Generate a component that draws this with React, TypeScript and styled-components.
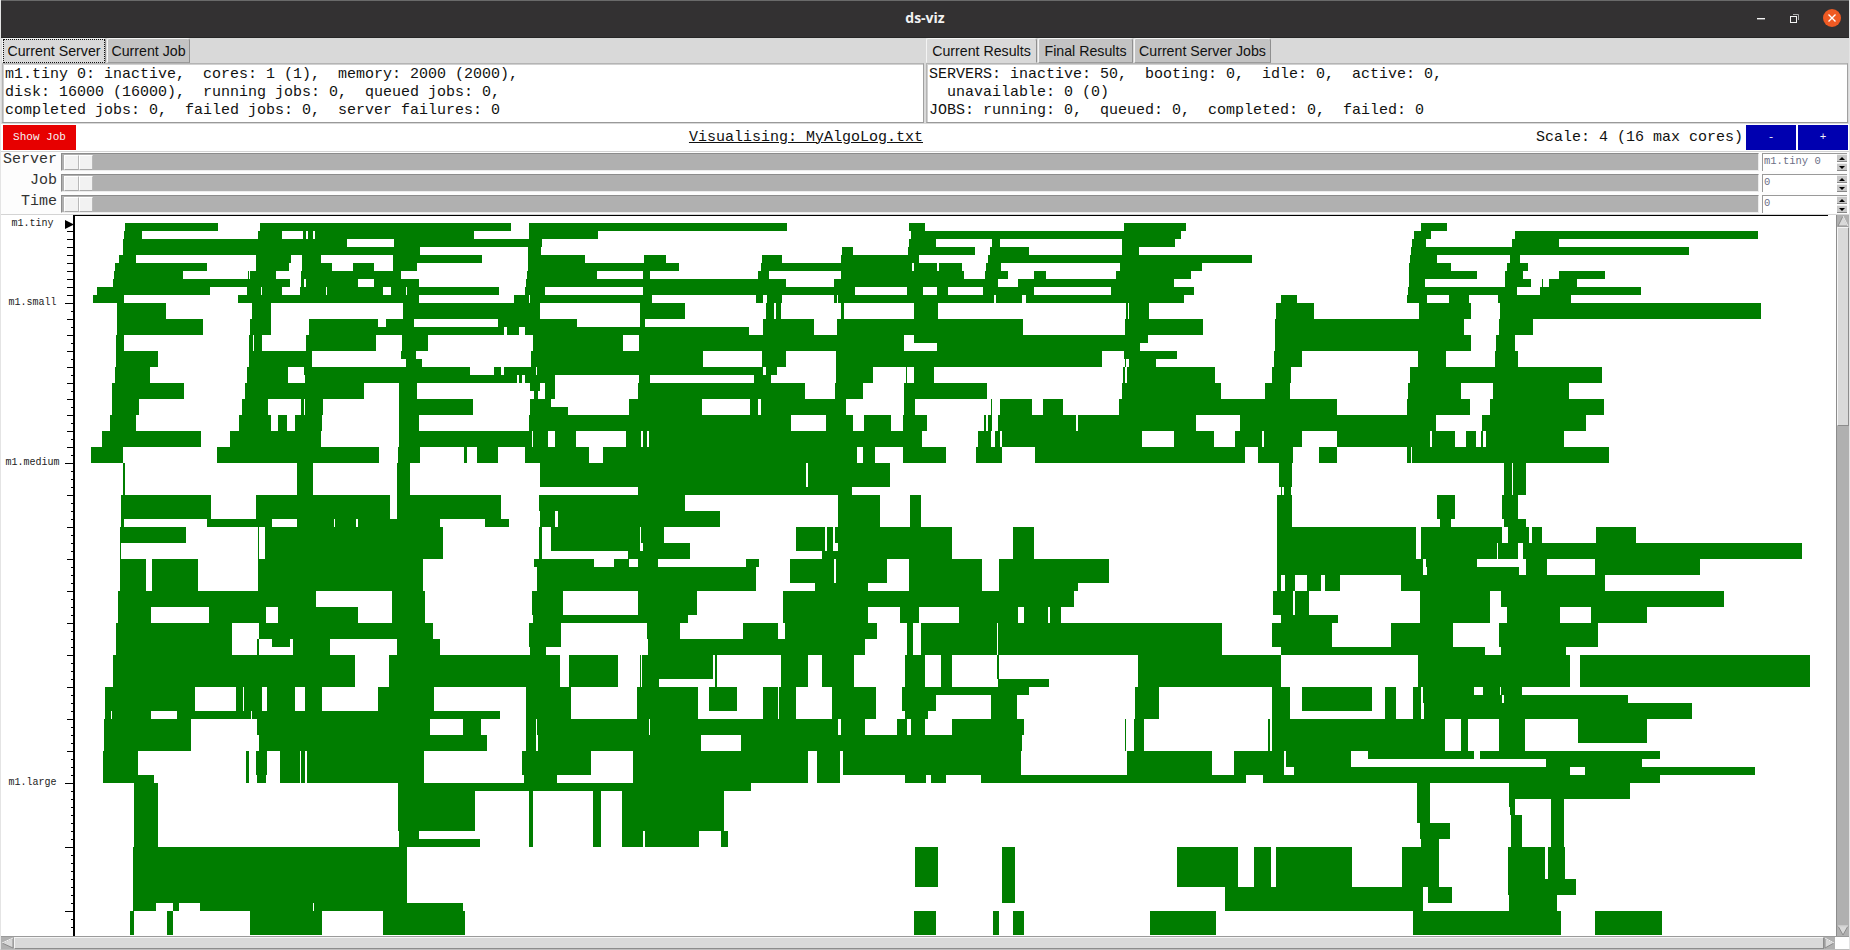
import React, { useMemo } from "react";
import styled, { createGlobalStyle } from "styled-components";

const Global = createGlobalStyle`
  html, body { margin: 0; padding: 0; background: #d9d9d9; overflow: hidden; }
  * { box-sizing: border-box; }
`;

const MONO = `"Liberation Mono", monospace`;
const SANS = `"Liberation Sans", sans-serif`;

const Window = styled.div`
  width: 1850px;
  height: 950px;
  display: flex;
  flex-direction: column;
  background: #d9d9d9;
  overflow: hidden;
  border-left: 1px solid #e4e4e4;
  border-right: 1px solid #e4e4e4;
  border-bottom: 1px solid #bdbdbd;
`;
const TitleBar = styled.header`
  height: 38px;
  flex: none;
  display: grid;
  grid-template-columns: 1fr auto 1fr;
  align-items: center;
  background: #333132;
  border-top: 1px solid #6a6a6a;
  border-bottom: 1px solid #262626;
  margin: 0 -1px;
`;
const Title = styled.div`
  color: #f2f2f2;
  font: 700 14px "Open Sans", sans-serif;
  padding-bottom: 3px;
`;
const WinControls = styled.div`
  grid-column: 3;
  display: flex;
  justify-content: flex-end;
  align-items: center;
  padding-right: 9px;
  gap: 24px;
  padding-bottom: 2px;
`;
const WinIcon = styled.svg`
  display: block;
  flex: none;
`;
const TopPanes = styled.div`
  display: grid;
  grid-template-columns: 924px 1fr;
  height: 86px;
  flex: none;
`;
const Pane = styled.section<{ $pad: number }>`
  display: flex;
  flex-direction: column;
  padding-left: ${(p) => p.$pad}px;
  padding-right: 1px;
`;
const TabStrip = styled.div`
  height: 25px;
  display: flex;
  gap: 1px;
  align-items: flex-end;
`;
const Tab = styled.div<{ $active?: boolean; $w: number }>`
  width: ${(p) => p.$w}px;
  height: 25px;
  display: flex;
  align-items: center;
  justify-content: center;
  font: 14.2px ${SANS};
  color: #111;
  white-space: nowrap;
  background: ${(p) => (p.$active ? "#d9d9d9" : "#c3c3c3")};
  border: 1px solid #8f8f8f;
  border-color: #f4f4f4 #8f8f8f ${(p) => (p.$active ? "#d9d9d9" : "#9a9a9a")} #f4f4f4;
  border-top-right-radius: 3px;
  border-top-left-radius: 2px;
`;
const Focused = styled.span`
  outline: 1px dotted #111;
  padding: 2px 3px;
  line-height: 18px;
`;
const InfoBox = styled.pre`
  margin: 0;
  height: 60px;
  background: #fff;
  border: 1px solid #b4b4b4;
  border-right-color: #a0a0a0;
  border-bottom-color: #999;
  box-shadow: inset 1px 1px 0 #d0d0d0;
  padding: 2px 0 0 2px;
  font: 15px/18px ${MONO};
  color: #111;
  overflow: hidden;
`;
const Toolbar = styled.div`
  flex: none;
  height: 28px;
  background: #fff;
  display: flex;
  align-items: center;
  justify-content: space-between;
  padding: 1px 1px 2px 2px;
  border-bottom: 1px solid #d4d4d4;
`;
const ActionButton = styled.button<{ $bg: string; $w: number }>`
  width: ${(p) => p.$w}px;
  height: 25px;
  background: ${(p) => p.$bg};
  color: #f4f4f4;
  border: 1px solid ${(p) => p.$bg};
  font: 11px ${MONO};
  padding: 0;
`;
const FileName = styled.div`
  font: 15px ${MONO};
  color: #111;
  text-decoration: underline;
`;
const ScaleGroup = styled.div`
  display: flex;
  align-items: center;
  gap: 2px;
`;
const ScaleText = styled.div`
  font: 15px ${MONO};
  color: #111;
  margin-right: 1px;
`;
const SliderGrid = styled.div`
  flex: none;
  background: #fdfdfd;
  display: grid;
  grid-template-columns: 59px 1fr 90px;
  grid-auto-rows: 21px;
  height: 63px;
  border-bottom: 1px solid #d4d4d4;
`;
const SliderLabel = styled.div`
  font: 15px/16px ${MONO};
  color: #333;
  text-align: right;
  padding-right: 3px;
  height: 21px;
`;
const Track = styled.div`
  height: 18px;
  margin: 1px 0 2px 1px;
  background: #b0b0b0;
  border-top: 1px solid #8c8c8c;
  border-left: 1px solid #8c8c8c;
  border-right: 1px solid #ececec;
  border-bottom: 1px solid #ececec;
  padding: 1px 0 0 2px;
  display: flex;
`;
const ThumbPart = styled.div`
  width: 14.5px;
  height: 15px;
  background: #f2f2f2;
  border: 1px solid #fff;
  border-right-color: #b9b9b9;
  border-bottom-color: #a9a9a9;
`;
const Spin = styled.div`
  height: 18px;
  margin: 1px 2px 2px 3px;
  background: #fff;
  border-top: 1px solid #9a9a9a;
  border-left: 1px solid #9a9a9a;
  display: flex;
  justify-content: space-between;
  padding-left: 1px;
`;
const SpinText = styled.span`
  font: 10.5px/14px ${MONO};
  color: #6c6f86;
`;
const SpinButtons = styled.div`
  width: 10px;
  display: flex;
  flex-direction: column;
  gap: 1px;
`;
const SpinBtn = styled.div`
  height: 8px;
  background: #c8c8c8;
  border-top: 1px solid #eee;
  border-bottom: 1px solid #888;
  display: flex;
  align-items: center;
  justify-content: center;
`;
const SpinArrow = styled.i<{ $up?: boolean }>`
  width: 0;
  height: 0;
  border-left: 3px solid transparent;
  border-right: 3px solid transparent;
  ${(p) => (p.$up ? "border-bottom: 3px solid #000;" : "border-top: 3px solid #000;")}
`;
const ChartRow = styled.div`
  flex: 1;
  min-height: 0;
  display: flex;
  background: #fff;
`;
const Axis = styled.div`
  position: relative;
  width: 74px;
  flex: none;
  background: #fff;
`;
const TypeLabel = styled.span<{ $y: number }>`
  position: absolute;
  left: 0;
  width: 63px;
  top: ${(p) => p.$y}px;
  text-align: center;
  font: 10px/12px ${MONO};
  color: #222;
`;
const Drawing = styled.svg`
  display: block;
  flex: none;
`;
const VScroll = styled.div`
  width: 13px;
  margin-left: auto;
  flex: none;
  background: #b0b0b0;
  border-left: 1px solid #8c8c8c;
  display: flex;
  flex-direction: column;
  justify-content: space-between;
`;
const VThumbWrap = styled.div`
  flex: 1;
  display: flex;
  flex-direction: column;
`;
const VThumb = styled.div`
  height: 199px;
  flex: none;
  background: #d9d9d9;
  border: 1px solid #f4f4f4;
  border-right-color: #8c8c8c;
  border-bottom-color: #8c8c8c;
`;
const HScroll = styled.div`
  flex: none;
  height: 13px;
  display: flex;
  background: #fff;
  border-top: 1px solid #9a9a9a;
`;
const HThumb = styled.div`
  flex: 1;
  background: #d9d9d9;
  border: 1px solid #f4f4f4;
  border-right-color: #8c8c8c;
  border-bottom-color: #8c8c8c;
`;
const Corner = styled.div`
  width: 14px;
  background: #fff;
  flex: none;
`;

type Row = [number, string, string];
const ROWS: Row[] = [
  [1, "131-318 402-907 943-1461", "140-165 477-574 942-983"],
  [1, "129-165 398-446 489-495 499-509 513-832 943-1082", "143-566 931-958 1090-1471"],
  [1, "127-577 671-968", "140-182 270-282 474-557 929-950 1085-1159"],
  [1, "127-724 941-967", "34-52 138-243 267-328 474-500 927-1363"],
  [1, "119-153 394-464 486-525 669-848 941-1055 1174-1218 1411-1451", "33-155 263-677 925-967 1082-1098"],
  [1, "111-296 394-460 486-547 589-631 669-718 941-1244 1409-1568", "0-144 147-184 187-223 260-284 470-599 924-989 1077-1110"],
  [1, "109-247 377-379 382-434 484-685 939-1080 1172-1186 1403-1425", "33-226 259-295 336-354 464-582 924-1030 1074-1102 1159-1231"],
  [1, "107-462 484-491 495-599 631-722 937-1459 1556-1568", "22-279 310-555 924-949 1074-1115 1132-1133 1143-1187"],
  [1, "74-302 376-404 406-446 482-534 537-649 665-696 698-883 935-975 1172-1568", "0-55 136-162 183-201 256-336 456-586 922-1093 1129-1287"],
  [1, "66-129 358-722 913-943 945-1190 1399-1414 1421-1451 1556-1562 1565-1568", "22-25 28-273 276-317 323-571 723-748 920-952 986-1018 1063-1178"],
  [2, "115-213 386-424 690-965 1166-1256 1419-1436 1440-1449", "33-37 147-185 480-483 485-516 715-775 939-1021 1066-1475"],
  [1, "115-287 382-424 501-639 655-712 880-1039 1166-1176 1413-1516 1562-1568", "27-318 478-601 713-1010 1065-1118"],
  [1, "115-287 382-424 501-893 899-923 935-1385 1413-1516 1562-1568", "27-318 478-601 713-1010 1065-1118"],
  [1, "113-129 380-388 390-406 495-635 688-740 951-1132 1164-1568", "0-132 147-514 713-1021 1060-1090"],
  [1, "113-129 380-388 390-406 495-635 688-740 951-1132 1164-1568", "0-132 184-502 713-1021 1060-1090"],
  [1, "113-197 380-507 685-716 947-1293 1411-1459 1560-1568", "25-442 477-560 712-756 938-982 1058-1094"],
  [1, "113-197 380-507 696-728 947-1293 1411-1459 1560-1568", "25-442 479-480 484-527 712-756 938-982 1058-1094"],
  [1, "111-181 376-458 491-824 872-886 893-957 959-1413 1419-1441 1560-1568", "25-83 135-136 147-179 475-478 482-619 709-739 925-1226"],
  [1, "111-181 376-458 493-919 923-929 935-995 1164-1186 1395-1429 1560-1568", "25-83 135-136 147-179 475-478 482-619 709-739 925-1226"],
  [1, "105-249 372-611 681-718 945-965 975-995 1162-1498 1558-1568", "24-67 132-262 474-629 698-737 922-1005 1055-1174"],
  [1, "105-249 372-611 681-718 953-961 975-995 1162-1498 1558-1568", "24-67 132-262 474-629 698-737 922-1005 1055-1174"],
  [1, "105-159 366-418 484-491 493-529 681-830 945-987 1144-1291 1387-1403 1409-1568", "0-41 132-149 268-270 282-332 350-381 469-811 920-1019 1051-1229"],
  [1, "105-159 366-418 484-491 493-529 681-830 945-1021 1144-1291 1387-1403 1409-1568", "0-41 132-149 268-270 282-332 350-381 469-811 920-1019 1051-1229"],
  [2, "101-153 360-424 438-456 472-527 681-722 943-1469 1540-1568", "9-52 69-111 130-168 257-260 263-270 279-401 405-590 659-966 1038-1201"],
  [2, "84-283 342-525 681-949 951-981 995-1037 1138-1168 1172-1180 1184-1568", "0-160 248-268 274-283 286-505 555-618 651-693 696-756 811-956 960-996 1013-1029 1036-1040 1044-1167"],
  [2, "62-127 316-641 679-724 812-818 838-880 935-1063 1092-1568", "0-58 67-86 130-198 245-285 337-666 687-742 782-811 920-927 928-1237"],
  [3, "126-131 476-509 677-704 965-1500 1504-1568", "0-110 720-740 1073-1085 1087-1107"],
  [1, "126-131 476-509 677-704 1162-1568", "0-50 723-725 728-739 1073-1085 1087-1107"],
  [2, "123-304 394-663 677-887 963-1256", "28-94 141-158 717-740 967-996 1069-1094"],
  [1, "123-304 394-663 677-887 965-995 1001-1327", "28-94 141-158 717-740 967-996 1069-1094"],
  [1, "123-129 296-426 476-550 553-596 599-764 854-903 965-995 1001-1327", "28-94 141-158 717-740 972-989 1073-1107"],
  [2, "121-253 398-400 412-770 963-969 987-1165 1168-1214 1480-1538 1542-1554 1558-1568", "0-8 11-20 28-207 303-336 716-935 942-1069 1079-1112 1116-1132 1217-1279"],
  [1, "121-123 398-400 412-770 963-969 987-1165 1172-1266 1480-1538 1542-1554 1565-1568", "0-8 11-20 28-207 303-336 716-935 942-1062 1063-1094 1102-1540"],
  [1, "121-123 398-400 412-770 963-969 1142-1266 1532-1568", "3-207 303-336 716-935 942-1062 1063-1094 1102-1540"],
  [1, "121-173 185-277 398-730 953-1073 1114-1144 1162-1202 1379-1405 1467-1556 1559-1568", "0-22 26-105 140-254 281-453 716-946 950-1030 1107-1140 1215-1380"],
  [1, "121-173 185-277 398-730 959-1399 1467-1556 1559-1568", "0-22 26-105 140-254 281-453 716-946 952-1096 1107-1140 1215-1380"],
  [1, "121-173 185-277 398-730 959-1399 1467-1556 1559-1568", "0-22 26-105 140-254 281-453 717-723 729-745 764-786 792-815 911-1231"],
  [1, "121-173 185-277 398-730 959-1399 1518-1568", "0-75 140-254 281-405 717-723 729-745 764-786 792-815 911-1231"],
  [2, "117-515 667-734 949-1011 1162-1281 1453-1568", "0-398 710-741 745-767 941-1051 1068-1417"],
  [1, "117-183 300-414 438-599 667-734 949-1011 1162-1281 1453-1568", "0-75 125-155 218-310 320-358 361-378 710-741 745-767 941-1051 1077-1160 1209-1297"],
  [1, "117-183 300-414 438-599 667-734 951-1262 1453-1568", "0-75 125-155 218-310 320-358 361-378 723-812 941-1051 1077-1160 1209-1297"],
  [2, "113-346 401-750 943-1007 1180-1246 1373-1443 1457-1568", "0-89 136-146 158-278 279-630 709-803 895-993 1065-1220"],
  [1, "113-346 396-400 426-462 468-543 677-764 943-1007 1182-1568", "0-71 136-146 158-278 279-630 709-803 895-993 1065-1220"],
  [1, "113-346 396-400 468-543 677-764 945-977 1182-1568", "0-71 136-146 158-278 279-630 723-1043 1068-1170"],
  [3, "107-593 661-1005 1023-1122 1166-1168 1170-1312 1316-1321 1449-1504 1531-1568", "24-53 133-165 190-207 278-280 499-723 938-1176 1192-1552"],
  [1, "107-593 661-1005 1023-1122 1166-1168 1170-1204 1316-1321 1449-1504 1531-1568", "24-53 133-165 190-207 279-359 499-723 938-1176 1192-1552"],
  [1, "90-271 354-368 370-406 417-472 493-527 639-752 937-1027 1160-1283 1305-1361 1413-1443 1445-1480 1552-1568", "19-88 129-328 494-532 709-737 756-866 886-903 930-943 945-1025 1040-1066 1068-1101"],
  [1, "90-271 354-368 370-406 417-472 493-527 639-752 937-1027 1160-1283 1305-1361 1413-1443 1445-1480 1552-1568", "19-88 129-182 268-309 494-532 709-737 756-866 886-903 930-943 945-1070 1072-1267"],
  [1, "90-271 354-368 370-406 417-472 493-527 639-752 937-1027 1160-1283 1305-1361 1413-1443 1445-1480 1552-1568", "19-88 129-182 268-309 494-532 709-737 756-866 886-903 930-943 947-1367"],
  [1, "90-102 105-183 235-384 386-885 937-1027 1160-1283 1413-1443 1445-1480 1552-1568", "19-88 133-169 268-309 494-532 709-737 886-903 930-943 947-1367"],
  [2, "88-263 396-744 810-846 937-957 959-1184 1186-1564", "0-29 33-71 121-136 143-165 207-320 478-480 492-508 703-705 708-980 1005-1016 1065-1105 1189-1297"],
  [1, "88-263 400-858 937-957 961-1289 1369-1568", "0-317 478-480 492-508 703-705 708-980 1005-1016 1065-1105 1189-1297"],
  [1, "88-263 400-858 937-957 961-1289 1369-1568", "0-317 478-480 492-508 703-705 708-980 1005-1016 1065-1105"],
  [1, "86-157 374-380 394-416 442-482 485-493 496-732 929-1067 1152-1504 1522-1568", "0-30 36-315 481-615 649-727 731-833 859-1025 1035-1317"],
  [1, "86-157 374-380 394-416 442-482 485-493 496-732 929-1067 1152-1504 1522-1568", "0-30 36-315 481-615 649-727 731-833 1138-1289"],
  [1, "86-157 374-380 394-416 442-482 485-493 496-732 929-1067 1152-1504 1522-1568", "0-30 36-315 481-615 649-727 743-1176 1200-1466"],
  [1, "86-189 374-380 396-414 442-482 485-493 496-732 933-999 1152-1504 1522-1568", "0-30 133-166 174-198 252-668 695-1317"],
  [1, "149-197 679-1389", "936-956 1080-1270"],
  [1, "149-197 679-834 943-951 1071-1088 1130-1335", "936-956 1080-1270"],
  [1, "149-197 679-834 943-951 1071-1088 1130-1335", "936-956 1080-1090 1146-1167"],
  [1, "149-197 679-834 943-951 1071-1088 1130-1335", "936-956 1082-1090 1146-1167"],
  [1, "149-197 679-834 943-951 1071-1088 1130-1335", "936-956 1084-1101 1146-1167"],
  [1, "149-197 679-834 943-951 1071-1088 1130-1335", "941-988 1084-1101 1146-1167"],
  [1, "149-197 681-722 943-951 1071-1088 1130-1172 1176-1285 1329-1343", "941-988 1084-1101 1146-1167"],
  [1, "149-197 681-844 943-951 1071-1088 1130-1172 1176-1285 1329-1343", "942-971 1084-1101 1146-1167"],
  [4, "147-698", "149-185 285-306 560-655 681-707 715-834 913-971 1079-1137 1142-1168"],
  [1, "147-698", "149-185 285-306 560-655 681-707 715-834 913-971 1079-1185"],
  [1, "147-698", "285-306 635-946 953-991 1079-1185"],
  [1, "147-698", "285-306 635-946 953-991 1081-1156"],
  [1, "147-193 227-239 281-508 510-810", "635-946 1081-1156"],
  [3, "141-149 215-227 382-527 649-814", "147-182 271-281 303-320 517-621 930-1162 1215-1320"],
];

const CHART_LEFT = 75;
const CHART_TOP = 215;
const CHART_W = 1761;
const CHART_H = 721;

function buildBars(): string {
  let d = "";
  let row = 0;
  const add = (runs: string, origin: number, scale: number, y: number, h: number) => {
    for (const run of runs.split(" ")) {
      const [a, b] = run.split("-").map(Number);
      const x0 = Math.round(origin + a / scale) - CHART_LEFT;
      const x1 = Math.max(Math.round(origin + b / scale) - CHART_LEFT, x0 + 1);
      d += `M${x0} ${y}H${x1}V${y + h}H${x0}Z`;
    }
  };
  for (const [n, left, right] of ROWS) {
    const y = 223 + row * 8 - CHART_TOP;
    add(left, 60, 1568 / 780, y, n * 8);
    add(right, 820, 1.568, y, n * 8);
    row += n;
  }
  return d;
}

function tickRows(): { y: number; x: number }[] {
  const out: { y: number; x: number }[] = [];
  for (let r = 1; r <= 88; r++) {
    const major = r === 10 || r === 30 || r === 70;
    let start = 70;
    if (major) start = 64;
    else if (r < 10) start = 66;
    else if (r < 30) start = r % 2 === 0 ? 66 : 70;
    else if (r < 70) start = (r - 30) % 4 === 0 ? 66 : 70;
    else start = (r - 70) % 8 === 0 ? 64 : 70;
    out.push({ y: 223 + r * 8 - CHART_TOP, x: start });
  }
  return out;
}

const ArrowBtn: React.FC<{ dir: "up" | "down" | "left" | "right"; w: number; h: number }> = ({ dir, w, h }) => {
  const pts = {
    up: `${w / 2},1 ${w - 1},${h - 1} 1,${h - 1}`,
    down: `1,1 ${w - 1},1 ${w / 2},${h - 1}`,
    left: `1,${h / 2} ${w - 1},1 ${w - 1},${h - 1}`,
    right: `1,1 ${w - 1},${h / 2} 1,${h - 1}`,
  }[dir];
  return (
    <Drawing width={w} height={h} viewBox={`0 0 ${w} ${h}`}>
      <rect width={w} height={h} fill="#b0b0b0" />
      <polygon points={pts} fill="#d9d9d9" stroke="#8c8c8c" strokeWidth="1" />
      <polyline
        points={pts.split(" ").slice(0, 2).join(" ")}
        fill="none"
        stroke="#f4f4f4"
        strokeWidth="1"
      />
    </Drawing>
  );
};

const SliderLine: React.FC<{ label: string; value: string }> = ({ label, value }) => (
  <>
    <SliderLabel>{label}</SliderLabel>
    <Track>
      <ThumbPart />
      <ThumbPart />
    </Track>
    <Spin>
      <SpinText>{value}</SpinText>
      <SpinButtons>
        <SpinBtn>
          <SpinArrow $up />
        </SpinBtn>
        <SpinBtn>
          <SpinArrow />
        </SpinBtn>
      </SpinButtons>
    </Spin>
  </>
);

export default function App() {
  const bars = useMemo(buildBars, []);
  const ticks = useMemo(tickRows, []);
  return (
    <>
      <Global />
      <Window>
        <TitleBar>
          <span />
          <Title>ds-viz</Title>
          <WinControls>
            <WinIcon width="9" height="4" viewBox="0 0 9 4">
              <rect y="2" width="8" height="1.4" fill="#f4f4f4" />
            </WinIcon>
            <WinIcon width="9" height="9" viewBox="0 0 9 9">
              <rect x="0.5" y="2.5" width="6" height="6" fill="none" stroke="#f4f4f4" />
              <path d="M3 .5H8.5V6" fill="none" stroke="#aaa" />
            </WinIcon>
            <WinIcon width="18" height="18" viewBox="0 0 18 18">
              <circle cx="9" cy="9" r="9" fill="#ef5a23" />
              <path d="M5.5 5.5L12.5 12.5M12.5 5.5L5.5 12.5" stroke="#fff" strokeWidth="1.4" />
            </WinIcon>
          </WinControls>
        </TitleBar>
        <TopPanes>
          <Pane $pad={1}>
            <TabStrip>
              <Tab $active $w={104}>
                <Focused>Current Server</Focused>
              </Tab>
              <Tab $w={83}>Current Job</Tab>
            </TabStrip>
            <InfoBox>{`m1.tiny 0: inactive,  cores: 1 (1),  memory: 2000 (2000),
disk: 16000 (16000),  running jobs: 0,  queued jobs: 0,
completed jobs: 0,  failed jobs: 0,  server failures: 0`}</InfoBox>
          </Pane>
          <Pane $pad={1}>
            <TabStrip>
              <Tab $active $w={111}>Current Results</Tab>
              <Tab $w={95}>Final Results</Tab>
              <Tab $w={137}>Current Server Jobs</Tab>
            </TabStrip>
            <InfoBox>{`SERVERS: inactive: 50,  booting: 0,  idle: 0,  active: 0,
  unavailable: 0 (0)
JOBS: running: 0,  queued: 0,  completed: 0,  failed: 0`}</InfoBox>
          </Pane>
        </TopPanes>
        <Toolbar>
          <ActionButton $bg="#e70000" $w={73}>Show Job</ActionButton>
          <FileName>Visualising: MyAlgoLog.txt</FileName>
          <ScaleGroup>
            <ScaleText>Scale: 4 (16 max cores)</ScaleText>
            <ActionButton $bg="#0000b0" $w={50}>-</ActionButton>
            <ActionButton $bg="#0000b0" $w={50}>+</ActionButton>
          </ScaleGroup>
        </Toolbar>
        <SliderGrid>
          <SliderLine label="Server" value="m1.tiny 0" />
          <SliderLine label="Job" value="0" />
          <SliderLine label="Time" value="0" />
        </SliderGrid>
        <ChartRow>
          <Axis>
            <TypeLabel $y={3}>m1.tiny</TypeLabel>
            <TypeLabel $y={82}>m1.small</TypeLabel>
            <TypeLabel $y={242}>m1.medium</TypeLabel>
            <TypeLabel $y={562}>m1.large</TypeLabel>
            <Drawing width={74} height={CHART_H} viewBox={`0 0 74 ${CHART_H}`}>
              <polygon points="64,5 73,9.5 64,14" fill="#000" />
              {ticks.map((t) => (
                <rect key={t.y} x={t.x} y={t.y} width={73 - t.x} height={1} fill="#000" />
              ))}
              <rect x={72} y={0} width={2} height={CHART_H} fill="#000" />
            </Drawing>
          </Axis>
          <Drawing width={CHART_W} height={CHART_H} viewBox={`0 0 ${CHART_W} ${CHART_H}`} shapeRendering="crispEdges">
            <rect x={-2} y={0} width={1755} height={1} fill="#000" />
            <path d={bars} fill="#007d00" />
          </Drawing>
          <VScroll>
            <VThumbWrap>
              <ArrowBtn dir="up" w={12} h={12} />
              <VThumb />
            </VThumbWrap>
            <ArrowBtn dir="down" w={12} h={11} />
          </VScroll>
        </ChartRow>
        <HScroll>
          <ArrowBtn dir="left" w={13} h={12} />
          <HThumb />
          <ArrowBtn dir="right" w={11} h={12} />
          <Corner />
        </HScroll>
      </Window>
    </>
  );
}
